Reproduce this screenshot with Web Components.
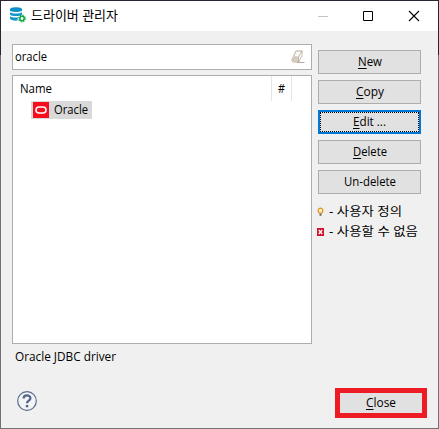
<!DOCTYPE html>
<html lang="ko">
<head>
<meta charset="utf-8">
<title>드라이버 관리자</title>
<style>
html,body{margin:0;height:100%;overflow:hidden}
body{font:12px/16px "Open Sans","Noto Sans CJK KR",sans-serif;color:#000}
</style>
</head>
<body>
<driver-dialog></driver-dialog>
<script>
const define=(name,html,setup)=>customElements.define(name,class extends HTMLElement{
  connectedCallback(){
    if(this.shadowRoot)return;
    const root=this.attachShadow({mode:'open'});
    const t=document.createElement('template');t.innerHTML=html;
    root.append(t.content.cloneNode(true));
    if(setup)setup(this,root);
  }
});

/* Label squeezed to a given width, in pixels */
define('fit-label',`<style>
:host{display:inline-block;white-space:nowrap;flex:none;height:16px}
span{display:inline-block;transform-origin:0 0;line-height:16px}
::slotted(u){text-decoration:underline;text-underline-offset:2px;text-decoration-thickness:1px;text-decoration-skip-ink:none}
</style><span><slot></slot></span>`,(el,root)=>{
  const w=+el.getAttribute('w'),s=root.querySelector('span');
  s.style.transform='scaleX('+w/s.getBoundingClientRect().width+')';
  el.style.width=w+'px';
});

define('push-button',`<style>
:host{display:flex;box-sizing:border-box;height:24px;border:1px solid #adadad;background:#e1e1e1;align-items:center;justify-content:center}
:host([focused]){border:2px solid #0078d7;outline:1px dotted #000;outline-offset:-3px}
:host([marked]){width:92px;height:30px;border:5px solid #ed1c24}
</style><slot></slot>`);

define('db-icon',`<style>:host{display:block;width:16px;height:16px}svg{display:block}</style>
<svg width="16" height="16" viewBox="0 0 16 16">
<path d="M0 2.3C0-.5 12-.5 12 2.3v1C12 5.5 0 5.5 0 3.3z" fill="#0d8fc7"/>
<path d="M0 5.2c2 1.8 10 1.8 12 0v2.3C11 9.5 1 9.5 0 7.5z" fill="#1596cc"/>
<path d="M0 9.2c2 1.6 6 1.6 8 1.2L7.5 13.600C4 14 .5 13 0 11.800z" fill="#1596cc"/>
<circle cx="12" cy="11.500" r="2.200" fill="#fff" stroke="#12a84a" stroke-width="1.600"/>
<circle cx="12" cy="11.500" r="3.300" fill="none" stroke="#12a84a" stroke-width="1.300" stroke-dasharray="1.300 1.290"/>
</svg>`);

define('window-controls',`<style>:host{display:block;width:103px;height:12px}svg{display:block}</style>
<svg width="103" height="12" viewBox="0 0 103 12" fill="none">
<path d="M0 6.500h10" stroke="#c4c4c4"/>
<path d="M45.500 1.500h9v9h-9z" stroke="#000"/>
<path d="M91 1l10 10M101 1L91 11" stroke="#000" stroke-width="1.100"/>
</svg>`);

define('title-bar',`<style>
:host{display:flex;box-sizing:border-box;height:30px;background:#fff;align-items:center;padding:0 17px 2px 9px}
fit-label{margin:0 auto 0 5px;font-size:13px}
window-controls{margin-top:1px}
</style><db-icon></db-icon><fit-label w="87"><slot></slot></fit-label><window-controls></window-controls>`);

define('filter-field',`<style>
:host{display:flex;box-sizing:border-box;height:26px;border:1px solid #abadb3;background:#fff;align-items:center;justify-content:space-between;padding:0 6px 0 2px}
svg{display:block}
</style><slot></slot>
<svg width="14" height="14" viewBox="0 0 14 14">
<path d="M5 1h6L7.500 12H2L.8 10z" fill="#fcfaf7" stroke="#b8aa9b"/>
<path d="M2.500 6l5.500.5L6.800 12H2L.8 10z" fill="#d6cbbf"/>
<path d="M7.500 12l3.500-6V1L7.500 7z" fill="#fff" stroke="#b8aa9b" stroke-width=".8"/>
<path d="M6 12.500h7.500" stroke="#b8aa9b"/>
</svg>`);

define('driver-table',`<style>
:host{display:flex;flex-direction:column;box-sizing:border-box;height:269px;border:1px solid #abadb3;background:#fff}
.head{display:flex;height:25px;box-sizing:border-box}
.name{width:259px;box-sizing:border-box;padding:5px 0 0 7px;border-right:1px solid #e5e5e5}
.num{width:20px;box-sizing:border-box;padding:5px 0 0 6px;border-right:1px solid #e5e5e5}
.row{display:flex;align-items:center;align-self:flex-start;box-sizing:border-box;height:18px;width:61px;margin-left:18px;padding-left:2px;background:#d9d9d9;gap:5px}
svg{display:block}
</style>
<div class="head"><div class="name"><fit-label w="32">Name</fit-label></div><div class="num"><fit-label w="7">#</fit-label></div></div>
<div class="row"><svg width="16" height="16"><path d="M0 0h16v16H0z" fill="#f80d1d"/><rect x="3" y="5" width="10" height="6" rx="3" fill="none" stroke="#fff" stroke-width="1.600"/></svg><fit-label w="34"><slot></slot></fit-label></div>`);

define('legend-item',`<style>
:host{display:flex;height:20px;align-items:center;gap:4px}
svg{display:block;flex:none}
</style><svg width="8" height="10" viewBox="0 0 8 10"></svg><slot></slot>`,(el,root)=>{
  root.querySelector('svg').innerHTML=el.getAttribute('kind')==='bulb'
  ?'<path d="M2.200 6C.3 4 1.200 1.100 3.500 1.100s3.200 2.900 1.300 4.900z" fill="#fff3b5" stroke="#dd901d" stroke-width="1.200"/><path d="M2.500 6.500h2v2.300h-2z" fill="#7a6650"/>'
  :'<path d="M0 1h7v8H0z" fill="#d2122e"/><path d="M1.800 3l3.400 4M5.200 3L1.800 7" stroke="#fff" stroke-width="1.300"/>';
});

define('help-icon',`<style>:host{display:block;width:20px;height:20px}svg{display:block}</style>
<svg width="20" height="20" viewBox="0 0 20 20" fill="none">
<circle cx="10" cy="10" r="9.300" fill="#f4f5f7" stroke="#5a6b8c" stroke-width="1.200"/>
<path d="M6.600 7.500C6.600 3.400 13.400 3.400 13.400 7.200 13.400 9.600 10 9.700 10 12.300" stroke="#53658a" stroke-width="2.300"/>
<path d="M8.800 14h2.500v2.300H8.800z" fill="#53658a"/>
</svg>`);

define('driver-dialog',`<style>
:host{display:flex;flex-direction:column;box-sizing:border-box;width:439px;height:429px;background:linear-gradient(#f0f0f0,#f0f0f0) padding-box,linear-gradient(#2b2433 55px,#737073 55px) border-box;border:1px solid transparent}
.main{display:grid;grid-template-columns:300px 103px;column-gap:6px;padding:13px 0 0 11px}
.left{display:flex;flex-direction:column;gap:5px}
.right{display:flex;flex-direction:column;padding-top:6px;gap:6px}
.legend{display:flex;flex-direction:column;margin:2px 0 0 -1px}
.status{padding:5px 0 0 14px;height:16px}
.foot{display:flex;align-items:center;justify-content:space-between;margin-top:auto;padding:0 11px 10px 16px}
help-icon{margin-top:-5px}
</style>
<title-bar>드라이버 관리자</title-bar>
<div class="main">
<div class="left">
<filter-field><fit-label w="32">oracle</fit-label></filter-field>
<driver-table>Oracle</driver-table>
</div>
<div class="right">
<push-button><fit-label w="24"><u>N</u>ew</fit-label></push-button>
<push-button><fit-label w="28"><u>C</u>opy</fit-label></push-button>
<push-button focused><fit-label w="33"><u>E</u>dit ...</fit-label></push-button>
<push-button><fit-label w="34"><u>D</u>elete</fit-label></push-button>
<push-button><fit-label w="52">Un-delete</fit-label></push-button>
<div class="legend">
<legend-item kind="bulb"><fit-label w="73">- 사용자 정의</fit-label></legend-item>
<legend-item kind="error"><fit-label w="89">- 사용할 수 없음</fit-label></legend-item>
</div>
</div>
</div>
<div class="status"><fit-label w="101">Oracle JDBC driver</fit-label></div>
<div class="foot"><help-icon></help-icon><push-button marked><fit-label w="30"><u>C</u>lose</fit-label></push-button></div>`);
</script>
</body>
</html>
